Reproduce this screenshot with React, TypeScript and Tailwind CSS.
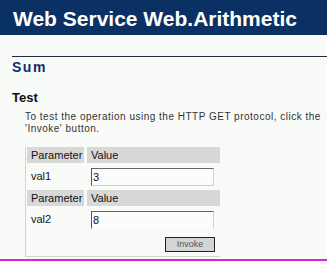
import React from "react";

const HeaderRow: React.FC = () => (
  <div className="flex h-[16px] text-[11px] leading-[16px] text-[#111]">
    <div className="w-[57px] bg-[#d8d8d8] pl-[4px]">Parameter</div>
    <div className="ml-[3px] w-[133px] bg-[#d8d8d8] pl-[4px]">Value</div>
  </div>
);

const ParamRow: React.FC<{ name: string; value: string; last?: boolean }> = ({
  name,
  value,
  last,
}) => (
  <div className="flex items-center h-[27px] text-[11px] text-[#111]">
    <div className="w-[60px] pl-[4px]">{name}</div>
    <input
      readOnly
      value={value}
      className={`ml-[4px] w-[123px] h-[18px] bg-[#fbfcfb] border border-t-[#666] border-l-[#555] border-r-[#d0d0d0] ${
        last ? "border-b-transparent" : "border-b-[#d0d0d0]"
      } px-[1px] text-[11px] leading-[14px] text-[#111] outline-none`}
    />
  </div>
);

export default function App() {
  return (
    <div className="w-[327px] h-[262px] overflow-hidden bg-[#f9fbf9] font-['Liberation_Sans',Arial,sans-serif] flex flex-col">
      {/* Title bar */}
      <div className="h-[35px] shrink-0 bg-[#0b3164] pl-[13px] pt-[7px]">
        <h1 className="text-[21px] leading-[24px] font-bold text-white whitespace-nowrap">
          Web Service Web.Arithmetic
        </h1>
      </div>

      <div className="pl-[12px] pt-[21px]">
        <div className="border-t border-[#1c2c44]" />
        <h2 className="mt-[2px] text-[14px] leading-[16px] font-bold text-[#0b3164] tracking-[1.5px]">
          Sum
        </h2>
        <h3 className="mt-[15px] text-[13px] leading-[16px] font-bold text-[#111]">
          Test
        </h3>

        <div className="pl-[13px] mt-[5px]">
          <p className="text-[10px] leading-[12px] text-[#333] whitespace-nowrap tracking-[0.5px]">
            To test the operation using the HTTP GET protocol, click the
            <br />
            'Invoke' button.
          </p>

          {/* Parameter form */}
          <div className="mt-[12px] w-[195px] border-l border-b border-[#d4d4d4] pl-px">
            <HeaderRow />
            <ParamRow name="val1" value="3" />
            <HeaderRow />
            <ParamRow name="val2" value="8" last />
            <div className="flex justify-end h-[23px] pt-[4px] pr-[5px]">
              <button className="w-[50px] h-[15px] bg-[#d4d4d4] border border-[#222] text-[9px] leading-[13px] text-[#555]">
                Invoke
              </button>
            </div>
          </div>
        </div>
      </div>

      <div className="mt-auto mb-px h-[2px] shrink-0 bg-[#d428d4]" />
    </div>
  );
}
